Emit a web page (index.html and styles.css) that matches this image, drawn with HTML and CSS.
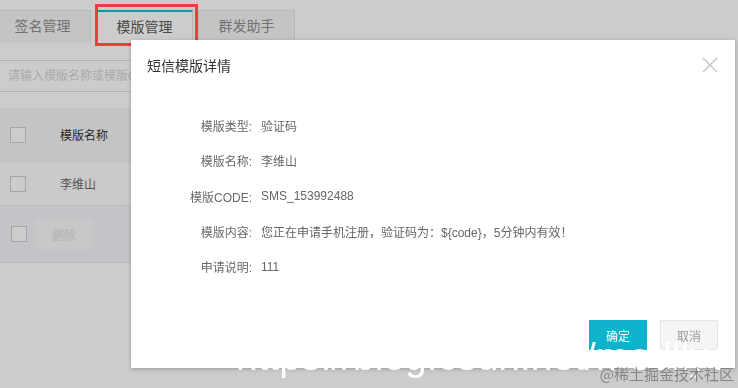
FILE: index.html
```html
<!DOCTYPE html>
<html lang="zh-CN">
<head>
  <meta charset="UTF-8" />
  <title>短信模版管理</title>
  <link rel="stylesheet" href="styles.css">
</head>
<body>
  <div class="page">
    <div class="tabs">
      <div class="tab">签名管理</div>
      <div class="tab active">模版管理</div>
      <div class="tab">群发助手</div>
    </div>

    <div class="search">
      <input type="text" placeholder="请输入模版名称或模版CODE">
    </div>

    <div class="grid">
      <div class="grid-row grid-head">
        <span class="check"></span>
        <span class="cell">模版名称</span>
      </div>
      <div class="grid-row">
        <span class="check"></span>
        <span class="cell">李维山</span>
      </div>
      <div class="grid-foot">
        <span class="check"></span>
        <button class="btn-del">删除</button>
      </div>
    </div>
  </div>

  <div class="mask"></div>

  <!-- annotation box around the active tab -->
  <div class="mark"></div>

  <div class="dialog">
    <div class="dialog-head">
      <span class="dialog-title">短信模版详情</span>
      <svg class="close" width="16" height="16" viewBox="0 0 16 16">
        <path d="M1 1 L15 15 M15 1 L1 15" stroke="#c4c4c4" stroke-width="1.4" fill="none" />
      </svg>
    </div>
    <div class="dialog-body">
      <div class="info-row"><span class="info-label">模版类型:</span><span class="info-value">验证码</span></div>
      <div class="info-row"><span class="info-label">模版名称:</span><span class="info-value">李维山</span></div>
      <div class="info-row"><span class="info-label">模版CODE:</span><span class="info-value">SMS_153992488</span></div>
      <div class="info-row"><span class="info-label">模版内容:</span><span class="info-value">您正在申请手机注册，验证码为：${code}，5分钟内有效！</span></div>
      <div class="info-row"><span class="info-label">申请说明:</span><span class="info-value">111</span></div>
    </div>
    <div class="dialog-foot">
      <button class="btn btn-ok">确定</button>
      <button class="btn btn-cancel">取消</button>
    </div>
  </div>

  <div class="wm-url">https://blog.csdn.net/medllyc</div>
  <div class="wm-site">@稀土掘金技术社区</div>
</body>
</html>
```

FILE: styles.css
```css
body {
  margin: 0;
  width: 738px;
  height: 388px;
  overflow: hidden;
  background: #fff;
  font-family: "Liberation Sans", "Noto Sans CJK SC", sans-serif;
  font-size: 12px;
  color: #666;
}
.page {
  padding-top: 10px;
}
.tabs {
  display: flex;
  gap: 5px;
  margin-left: -6px;
}
.tab {
  box-sizing: border-box;
  width: 97px;
  height: 33px;
  line-height: 31px;
  text-align: center;
  font-size: 14px;
  color: #8e8e8e;
  background: #f5f5f5;
  border: 1px solid #e6e6e6;
  border-bottom: none;
}
.tab.active {
  background: #fff;
  color: #5c5c5c;
  border-top: 2px solid #1cb9cc;
  line-height: 30px;
}
.search {
  margin-top: 17px;
  margin-left: -1px;
}
.search input {
  box-sizing: border-box;
  width: 420px;
  height: 32px;
  padding: 0 8px;
  border: 1px solid #dcdcdc;
  font-family: inherit;
  font-size: 12px;
  outline: none;
}
.search input::placeholder {
  color: #d6d6d6;
}
.grid {
  margin-top: 16px;
  width: 620px;
}
.grid-row {
  display: flex;
  align-items: center;
  height: 43px;
  padding-left: 10px;
  background: #fdfdfd;
  border-bottom: 1px solid #f0f0f0;
  font-size: 12px;
}
.grid-head {
  height: 53px;
  background: #f6f6f6;
  color: #3c3c3c;
}
.grid-row .cell {
  margin-left: 34px;
  color: #6a6a6a;
}
.grid-head .cell {
  color: #333;
}
.check {
  box-sizing: border-box;
  width: 16px;
  height: 16px;
  border: 1px solid #cfcfcf;
  background: #fff;
}
.grid-foot {
  display: flex;
  align-items: center;
  height: 56px;
  padding-left: 11px;
  background: #f4f5f9;
  border-bottom: 1px solid #e8e9ee;
}
.btn-del {
  margin-left: 8px;
  width: 58px;
  height: 31px;
  border: none;
  background: #fafafa;
  color: #dedede;
  font-family: inherit;
  font-size: 12px;
}
.mask {
  position: fixed;
  inset: 0;
  background: rgba(0, 0, 0, 0.2);
}
.mark {
  position: absolute;
  left: 95px;
  top: 4px;
  width: 103px;
  height: 42px;
  box-sizing: border-box;
  border: 3px solid #f23b3d;
}
.dialog {
  position: absolute;
  left: 131px;
  top: 40px;
  width: 604px;
  height: 328px;
  background: #fff;
  box-shadow: 0 1px 4px rgba(0, 0, 0, 0.25);
  display: flex;
  flex-direction: column;
}
.dialog-head {
  display: flex;
  align-items: center;
  justify-content: space-between;
  height: 50px;
  padding: 0 17px 0 16px;
}
.dialog-title {
  font-size: 14px;
  color: #333;
}
.dialog-body {
  padding-top: 18px;
}
.info-row {
  display: flex;
  align-items: center;
  height: 35.3px;
}
.info-label {
  width: 121px;
  text-align: right;
  color: #6a6a6a;
}
.info-value {
  margin-left: 9px;
  color: #666;
}
.dialog-foot {
  margin-top: auto;
  display: flex;
  justify-content: flex-end;
  gap: 13px;
  padding: 0 17px 18px 0;
}
.btn {
  width: 58px;
  height: 30px;
  font-family: inherit;
  font-size: 12px;
  border: 1px solid transparent;
}
.btn-ok {
  background: #0fb2cd;
  color: #fff;
}
.btn-cancel {
  background: #f5f5f5;
  border-color: #e6e6e6;
  color: #9a9a9a;
}
.wm-url {
  position: absolute;
  left: 236px;
  top: 337px;
  font-size: 39px;
  line-height: 39px;
  color: #fff;
  white-space: nowrap;
}
.wm-site {
  position: absolute;
  right: 4px;
  top: 365px;
  font-size: 15px;
  line-height: 18px;
  color: #858585;
  font-family: "Noto Sans CJK SC", sans-serif;
}
```
